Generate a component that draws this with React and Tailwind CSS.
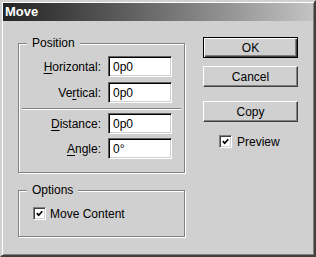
function Check() {
  return (
    <span className="w-[13px] h-[13px] bg-white border border-t-[#808080] border-l-[#808080] border-r-white border-b-white shadow-[inset_1px_1px_0_#404040,inset_-1px_-1px_0_#d0d0d0] flex items-center justify-center">
      <svg width="7" height="7" viewBox="0 0 7 7">
        <polyline points="0.8,3.2 2.7,5.2 6.3,1.2" fill="none" stroke="#000" strokeWidth="1.7" />
      </svg>
    </span>
  )
}

function Field({ label, hot, value }) {
  const i = label.indexOf(hot)
  return (
    <div className="flex items-center h-[21px]">
      <span className="w-[79px] text-right leading-[14px]">
        {label.slice(0, i)}
        <span className="underline underline-offset-[2px]">{hot}</span>
        {label.slice(i + 1)}:
      </span>
      <div className="ml-[7px] w-[64px] h-[21px] bg-white border border-t-[#606060] border-l-[#606060] border-r-white border-b-white shadow-[inset_1px_1px_0_#000,inset_-1px_-1px_0_#d0d0d0] pl-[4px] flex items-center leading-[14px]">
        {value}
      </div>
    </div>
  )
}

function Button({ children, isDefault }) {
  return (
    <button
      className={
        isDefault
          ? 'w-[95px] h-[21px] border border-black shadow-[inset_1px_1px_0_#fff,inset_-1px_-1px_0_#404040,inset_-2px_-2px_0_#808080] bg-[#d0d0d0] leading-[14px]'
          : 'w-[95px] h-[21px] border border-t-white border-l-white border-r-[#404040] border-b-[#404040] shadow-[inset_-1px_-1px_0_#808080] bg-[#d0d0d0] leading-[14px]'
      }
    >
      {children}
    </button>
  )
}

export default function App() {
  return (
    <div className="w-[316px] h-[257px] bg-[#d0d0d0] border-2 border-t-[#d0d0d0] border-l-[#d0d0d0] border-r-[#404040] border-b-[#404040] shadow-[inset_1px_1px_0_#fff,inset_-1px_-1px_0_#808080] p-[1px] font-['Liberation_Sans',Arial,sans-serif] text-[12px] text-black">
      <div className="h-[18px] bg-linear-to-r from-[#242424] to-[#c4c4c4] flex items-center pl-[2px] text-white font-bold text-[13px]">
        Move
      </div>

      <div className="flex pl-[15px]">
        <div className="w-[167px]">
          <div className="relative mt-[22px] border border-[#808080] shadow-[inset_1px_1px_0_#fff,1px_1px_0_#fff] px-[3px] pt-[12px] pb-[13px]">
            <span className="absolute -top-[8px] left-[8px] bg-[#d0d0d0] px-[5px] leading-[14px]">Position</span>
            <Field label="Horizontal" hot="H" value="0p0" />
            <div className="mt-[5px]">
              <Field label="Vertical" hot="r" value="0p0" />
            </div>
            <div className="mt-[5px] h-[2px] border-t border-t-[#808080] border-b border-b-white" />
            <div className="mt-[3px]">
              <Field label="Distance" hot="D" value="0p0" />
            </div>
            <div className="mt-[4px]">
              <Field label="Angle" hot="A" value="0°" />
            </div>
          </div>

          <div className="relative mt-[17px] border border-[#808080] shadow-[inset_1px_1px_0_#fff,1px_1px_0_#fff] px-[3px] pt-[16px] pb-[16px]">
            <span className="absolute -top-[8px] left-[8px] bg-[#d0d0d0] px-[5px] leading-[14px]">Options</span>
            <div className="ml-[11px] flex items-center gap-[4px] h-[13px]">
              <Check />
              <span className="leading-[14px]">Move Content</span>
            </div>
          </div>
        </div>

        <div className="ml-[18px] mt-[16px] w-[95px] flex flex-col">
          <Button isDefault>OK</Button>
          <div className="mt-[8px]">
            <Button>Cancel</Button>
          </div>
          <div className="mt-[14px]">
            <Button>Copy</Button>
          </div>
          <div className="mt-[13px] pl-[16px] flex items-center gap-[5px] h-[13px]">
            <Check />
            <span className="leading-[14px]">Preview</span>
          </div>
        </div>
      </div>
    </div>
  )
}
